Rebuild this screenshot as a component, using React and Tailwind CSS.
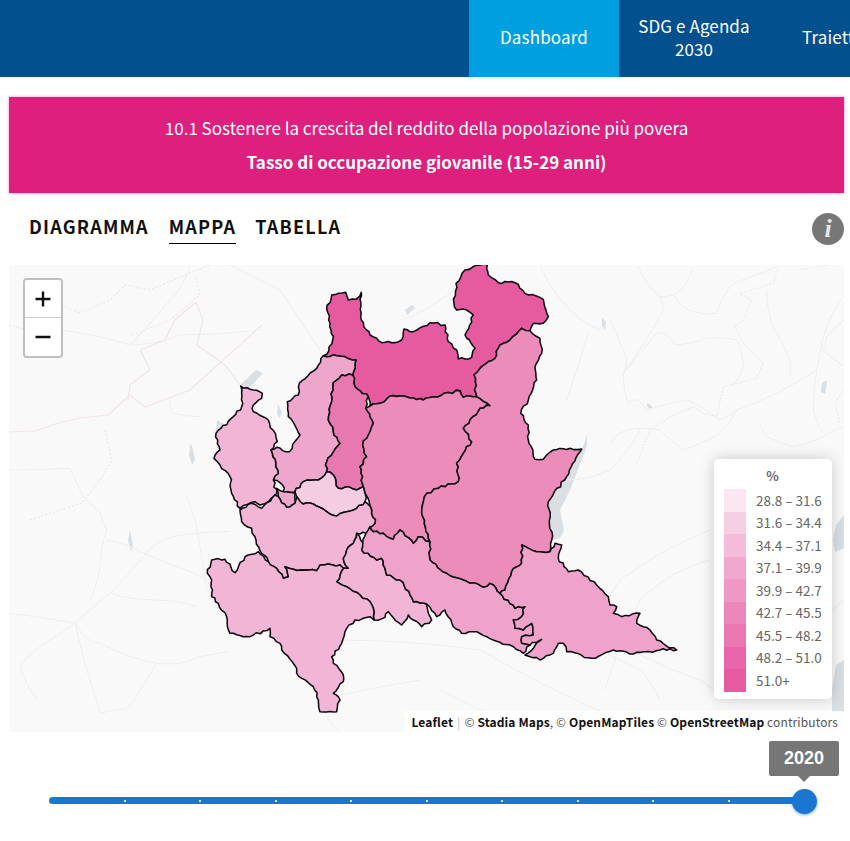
import React from "react";

const T = (s) => s.trim().split(/\s+/).map((p) => p.split(",").map(Number));
// y in zoom-3 frame gets shifted to the common frame
const L = (s) => T(s).map(([x, y]) => [x, y + 660]);

function hash(a, b) {
  const v = Math.sin(a * 12.9898 + b * 78.233) * 43758.5453;
  return v - Math.floor(v);
}
function rough(pts) {
  const out = [];
  for (let i = 0; i < pts.length; i++) {
    const a = pts[i];
    const b = pts[(i + 1) % pts.length];
    const flip = a[0] > b[0] || (a[0] === b[0] && a[1] > b[1]);
    const p = flip ? b : a;
    const q = flip ? a : b;
    const len = Math.hypot(q[0] - p[0], q[1] - p[1]);
    const n = Math.max(1, Math.round(len / 11));
    const seg = [];
    for (let k = 1; k < n; k++) {
      const t = k / n;
      const d = (hash(p[0] + k, q[1] + k * 3) - 0.5) * 8;
      const nx = -(q[1] - p[1]) / (len || 1);
      const ny = (q[0] - p[0]) / (len || 1);
      seg.push([p[0] + (q[0] - p[0]) * t + nx * d, p[1] + (q[1] - p[1]) * t + ny * d]);
    }
    if (flip) seg.reverse();
    out.push(a, ...seg);
  }
  return out.map(([x, y]) => `${x.toFixed(1)},${y.toFixed(1)}`).join(" ");
}

const regions = [
  // Sondrio / Alta
  ["#e65a9f", [...T(`380,283 398,240 390,190 380,148 395,105 437,97 445,120 468,118 484,97 484,180 510,225 545,248 575,248 605,240 612,207 640,215 690,188 735,195 745,245 770,270 775,297 815,292 825,265 795,225 820,165 800,150 770,150 762,130 768,70 795,30 830,15 862,15 865,45 895,68 945,68 975,100 1030,118 1045,170 1030,190 1000,190 990,212 965,205 930,240 900,255 885,295 840,325 822,345 830,410 790,412 780,392 700,410 670,420 620,410 570,408 540,430 510,438 505,410 465,380 458,345 468,300 410,287 370,287`)]],
  // Como
  ["#efa6cc", T(`370,287 410,287 468,300 458,345 425,345 400,368 395,425 385,480 400,515 420,550 380,605 380,635 355,660 310,665 285,695 250,695 248,675 220,660 235,640 212,570 230,562 268,575 300,525 265,470 262,425 295,405 298,370 350,325`)],
  // Lecco
  ["#e878b0", T(`425,345 458,345 465,380 505,410 497,445 520,490 505,525 488,555 500,590 480,620 490,680 470,690 445,680 415,685 400,645 380,635 380,605 420,550 400,515 385,480 395,425 400,368`)],
  // Bergamo
  ["#ec8cba", [...T(`497,445 510,438 540,430 570,408 620,410 670,420 700,410 780,392 790,412 830,410 870,437 840,445 790,505 815,545 790,580 770,610 775,665 715,685 680,700`), ...L(`670,65 665,100 690,185 655,170 640,190 600,150 580,178 550,160 520,155 510,140 525,130 515,90 495,40`), ...T(`490,680 480,620 500,590 488,555 505,525 520,490`)]],
  // Brescia
  ["#ec8cba", [...T(`830,410 822,345 840,325 885,295 900,255 930,240 965,205 990,212 1020,235 1025,280 1005,320 1010,360 985,420 962,460 985,495 985,540 1005,598 1030,598 1060,570 1110,565 1145,567 1100,650`), ...L(`1045,65 1055,180 1050,215 1010,215 965,195 965,250 935,275 915,330 900,340 870,310 850,322 790,300 740,280 690,240 690,185 665,100 670,65`), ...T(`680,700 715,685 775,665 770,610 790,580 815,545 790,505 840,445 870,437`)]],
  // Varese
  ["#f3b5d5", T(`122,378 160,390 187,400 185,415 160,435 160,455 205,480 232,545 212,570 235,640 220,660 230,700 205,725 180,735 165,725 120,745 95,700 90,650 60,615 42,595 60,570 48,520 100,470 125,440`)],
  // Monza
  ["#efa6cc", L(`230,25 250,35 285,40 285,70 260,82 235,50`)],
  // Milano
  ["#f5cde2", L(`285,35 310,5 355,0 380,-25 400,-15 415,25 445,20 470,30 490,20 495,40 495,65 470,85 440,95 410,108 380,95 340,72 310,72 290,50`)],
  // Pavia nord (Milano sud)
  ["#f3b5d5", L(`120,90 155,70 185,85 225,45 235,50 260,82 285,70 290,50 310,72 340,72 380,95 410,108 440,95 470,85 495,65 515,90 525,130 498,160 470,160 460,190 440,210 430,235 445,265 430,265 420,255 360,255 350,272 280,268 255,260 265,290 250,295 230,265 205,245 180,212 165,170 155,145 125,125`)],
  // Lodi
  ["#f3b5d5", L(`470,160 490,190 485,210 530,240 545,235 560,285 600,300 630,345 640,365 680,372 695,420 665,440 625,405 605,435 565,395 555,412 522,420 520,385 510,365 480,345 440,320 410,305 430,265 445,265 430,235 440,210 460,190`)],
  // Cremona
  ["#efa3ca", L(`498,160 510,140 520,155 550,160 580,178 600,150 640,190 655,170 690,185 690,240 740,280 790,300 850,322 870,310 900,340 945,385 975,380 965,410 940,420 945,445 970,450 995,430 1000,465 965,470 965,490 990,495 970,520 930,495 880,480 830,455 785,460 760,440 735,390 710,410 695,392 680,372 640,365 630,345 600,300 560,285 545,235 530,240 485,210`)],
  // Mantova
  ["#efa3ca", L(`965,195 1010,215 1050,215 1065,190 1085,195 1075,235 1105,275 1135,270 1190,315 1225,350 1230,375 1250,380 1240,400 1265,410 1320,400 1310,430 1350,450 1370,480 1430,510 1380,510 1300,522 1240,510 1175,535 1100,515 1090,490 1075,490 1060,520 1020,540 975,525 1025,478 990,495 965,490 965,470 1000,465 995,430 970,450 945,445 940,420 965,410 975,380 945,385 900,340 915,330 935,275 965,250`)],
  // Pavia
  ["#f3b5d5", L(`22,280 35,240 75,238 105,278 135,230 175,215 205,245 230,265 250,295 265,290 255,260 280,268 350,272 360,255 420,255 430,265 410,305 440,320 480,345 510,365 520,385 522,420 510,410 465,420 440,445 425,490 395,530 400,550 430,585 430,605 400,640 420,660 410,695 360,695 355,660 340,620 290,580 290,565 245,510 240,490 210,470 210,445 150,470 90,460 80,410 55,370 35,350 35,300`)],
];

const legend = [
  ["#fbe6f1", "28.8 – 31.6"],
  ["#f7cfe3", "31.6 – 34.4"],
  ["#f4bcd9", "34.4 – 37.1"],
  ["#f1a8cf", "37.1 – 39.9"],
  ["#ef97c5", "39.9 – 42.7"],
  ["#ec87bb", "42.7 – 45.5"],
  ["#ea76b2", "45.5 – 48.2"],
  ["#e866a9", "48.2 – 51.0"],
  ["#e65a9f", "51.0+"],
];

const roads = [
  // bottom-left frame x/3, 380+y/3
  "M27 700 Q120 710 225 730 Q280 680 330 640 Q380 590 430 530 Q470 480 520 470 Q600 455 690 455",
  "M225 730 Q260 790 300 790 Q400 840 470 850 Q540 860 600 830 Q650 820 690 815",
  "M225 730 Q240 790 250 830 Q260 870 270 900 Q290 960 300 1000",
  "M225 730 Q170 770 120 800 Q80 830 60 860 Q80 920 110 960",
  "M320 450 Q300 510 300 560 Q290 620 270 660",
  "M320 480 Q380 490 430 520 Q500 550 560 570 Q600 590 620 600",
  "M560 350 Q590 420 600 500 Q610 570 620 620 Q640 680 680 720",
  "M470 850 Q440 900 420 930 Q400 970 380 985 Q340 990 300 1000",
  "M330 640 Q400 660 460 660 Q530 660 590 680",
  "M27 270 Q120 270 210 265 Q230 310 250 350 Q280 380 300 400 Q310 430 320 450",
  "M510 60 Q510 90 520 100 Q560 110 600 110",
];
const roads2 = [
  // top-right frame 560+x/3, 260+y/3
  "M235 20 Q260 80 300 110 Q320 140 300 170 Q250 260 190 340 Q190 400 205 430 Q230 400 260 450 Q320 430 380 420 Q430 440 480 480 Q510 470 530 450 Q650 410 770 330 Q780 280 790 230 Q810 160 850 110",
  "M300 110 Q320 110 340 105 Q380 90 400 20",
  "M340 105 Q370 150 400 155 Q440 165 470 160 Q490 100 520 70 Q600 40 650 20",
  "M190 340 Q240 280 290 220 Q320 210 345 255 Q400 250 440 235 Q490 230 530 240 Q550 280 550 320 Q540 360 510 380",
  "M85 220 Q70 260 60 300 Q40 360 20 420",
  "M150 180 Q180 240 200 300 Q200 320 190 340",
  "M600 490 Q610 520 620 530 Q660 550 700 560 Q750 550 790 530 Q820 510 850 500",
  "M770 330 Q760 390 760 450 Q770 490 790 520",
  "M150 550 Q170 520 200 510 Q250 500 300 510 Q330 540 370 570 Q430 550 480 520 Q510 490 530 450",
  "M620 90 Q620 150 640 200 Q670 250 690 300 Q695 330 690 350",
];
const roads3 = [
  // middle/bottom in page coordinates
  "M440 690 Q470 705 500 720 Q570 730 640 732",
  "M335 640 Q410 640 480 650 Q550 690 620 720 Q700 730 780 720",
  "M420 680 Q360 690 320 700 Q325 720 340 732",
  "M605 690 Q620 640 640 600 Q670 570 710 560",
  "M590 640 Q600 610 620 580 Q660 550 710 530",
  "M630 650 Q670 670 700 680 L714 690",
  "M660 700 Q650 680 640 670 Q620 660 600 650",
  "M770 700 Q780 670 800 640 Q820 620 844 600",
  "M200 250 Q240 270 280 290 Q300 320 320 350",
  "M470 265 Q460 290 440 300 Q420 315 400 320",
  "M540 265 Q550 290 570 310 Q585 325 600 330",
  "M60 330 Q100 335 130 345 Q155 345 180 335 Q220 335 260 330",
  "M190 265 Q185 285 170 300 Q150 325 130 345",
  "M565 480 Q590 480 610 470 Q630 450 640 430",
];

function BaseMap() {
  return (
    <svg className="absolute inset-0 h-full w-full" viewBox="9 265 835 467" aria-hidden="true">
      <rect x="9" y="265" width="835" height="467" fill="#f9f9f9" />
      {/* lakes */}
      <g fill="#d9dfe3">
        <path d="M217 420 L224 424 L232 446 L222 452 L215 436 Z" />
        <path d="M190 444 L192 446 L195 460 L192 465 L189 455 Z" />
        <path d="M241 384 L256 370 L263 373 L252 385 L240 394 Z" />
        <path d="M278 404 L282 412 L280 418 L277 414 Z" />
        <path d="M405 310 L412 305 L415 308 L407 315 Z" />
        <path d="M583 447 L587 434 L587 446 L570 490 L560 510 L564 530 L560 538 L552 540 L545 500 Z" />
        <path d="M130 530 L133 545 L131 552 L128 540 Z" />
        <path d="M836 525 L844 515 L844 548 L835 552 L833 540 Z" />
        <path d="M836 665 L844 660 L844 712 L832 712 L832 690 Z" />
        <path d="M822 383 L827 380 L825 394 L821 392 Z" />
        <path d="M647 403 L651 405 L652 408 L648 408 Z" />
        <path d="M602 318 L606 322 L605 330 L602 325 Z" />
      </g>
      <g fill="none" stroke="#eeeeee" strokeWidth="1">
        <g transform="scale(0.3333) translate(0 1140)">
          {roads.map((d) => <path key={d} d={d} strokeWidth="3" />)}
        </g>
        <g transform="translate(560 260) scale(0.3333)">
          {roads2.map((d) => <path key={d} d={d} strokeWidth="3" />)}
        </g>
        {roads3.map((d) => <path key={d} d={d} />)}
      </g>
      <g fill="none" stroke="#f2e4e8" strokeWidth="1.2">
        <path d="M9 432 L35 431 L55 424 L80 418 L108 415 L130 395 L145 407 L190 390 L262 325" />
        <path d="M132 335 L170 320 L200 295 L195 275" strokeDasharray="2 2" />
        <path d="M9 325 L24 329 M63 306 L80 313 L110 300 L125 285 L150 290 L185 275 L210 265" strokeDasharray="2 2" />
        <path d="M196 302 L175 320 L165 340 L140 350 L150 370 L130 385 L128 400" />
        <path d="M196 302 L203 320 L197 345 L225 365 L240 385" />
        <path d="M105 430 L112 460 L100 480 L82 503 L60 510 L30 520" strokeDasharray="2 2" />
        <g transform="translate(560 260) scale(0.3333)" strokeDasharray="5 5" strokeWidth="3.6">
          <path d="M655 20 L640 70 L540 100 L575 120 L550 180 L525 200 L550 250 L610 310 L590 355 L490 380 L470 470 L430 460 L400 440 L330 470 L270 510 L230 610" />
          <path d="M850 180 L800 230 L790 270 L850 320 M850 390 L825 430 L840 490" />
          <path d="M720 30 L810 15" />
        </g>
      </g>
    </svg>
  );
}

function Regions() {
  return (
    <svg className="absolute inset-0 h-full w-full" viewBox="9 265 835 467" aria-hidden="true">
      <g transform="translate(200 260) scale(0.33333)" strokeLinejoin="round">
        {regions.map(([fill, pts], i) => (
          <polygon key={i} points={rough(pts)} fill={fill} stroke="#0c0810" strokeWidth="4.6" />
        ))}
      </g>
    </svg>
  );
}

function Slider() {
  const ticks = [125, 200, 276, 351, 427, 502, 578, 653, 729];
  return (
    <div className="relative h-[109px]">
      <div className="absolute left-[769px] top-[9px] flex h-[35px] w-[70px] items-center justify-center rounded-[2px] bg-[#767676] font-['Liberation_Sans',sans-serif] text-[18px] font-bold text-white">
        2020
      </div>
      <div className="absolute left-[798px] top-[44px] h-0 w-0 border-x-[6px] border-t-[6px] border-x-transparent border-t-[#767676]" />
      <div className="absolute left-[49px] top-[65px] h-[7px] w-[755px] rounded-full bg-[#1b76d2]" />
      {ticks.map((x) => (
        <div key={x} style={{ left: x - 1 }} className="absolute top-[68px] h-[2px] w-[2px] bg-[#cfe6fb]" />
      ))}
      <div className="absolute left-[792px] top-[57px] h-[25px] w-[25px] rounded-full bg-[#1b76d2] shadow-[0_1px_3px_rgba(27,118,210,0.6)]" />
    </div>
  );
}

export default function App() {
  return (
    <div className="h-[841px] w-[850px] overflow-hidden bg-white font-['Noto_Sans_CJK_SC','Noto_Sans',sans-serif] text-black">
      <header className="flex h-[77px] overflow-hidden bg-[#03508f] pl-[469px] text-[17px] text-white">
        <div className="flex w-[150px] shrink-0 items-center justify-center bg-[#009fdf] pb-[4px] tracking-[0.15px]">Dashboard</div>
        <div className="flex w-[150px] shrink-0 items-center justify-center pb-[3px] text-center leading-[23px] tracking-[0.1px]">
          SDG e Agenda<br />2030
        </div>
        <div className="ml-[33px] flex shrink-0 items-center pb-[4px] tracking-[0.15px]">Traiettorie</div>
      </header>

      <div className="ml-[9px] mt-[20px] flex h-[96px] w-[835px] flex-col items-center bg-[#dd1f7d] pt-[18px] text-white shadow-[0_0_3px_rgba(221,31,125,0.5)]">
        <div className="text-[17px] leading-[26px]">10.1 Sostenere la crescita del reddito della popolazione più povera</div>
        <div className="mt-[8px] text-[17px] font-bold leading-[26px]">Tasso di occupazione giovanile (15-29 anni)</div>
      </div>

      <div className="relative flex h-[72px] items-start pl-[29px] pt-[20px] text-[18px] font-bold leading-[26px] tracking-[1.2px] text-[#111]">
        <span>DIAGRAMMA</span>
        <span className="ml-[20px] border-b-[1.5px] border-black pb-[4px]">MAPPA</span>
        <span className="ml-[19px]">TABELLA</span>
        <div className="absolute right-[6px] top-[20px] flex h-[32px] w-[32px] items-center justify-center rounded-full bg-[#777] font-['Liberation_Serif',serif] text-[26px] italic tracking-normal text-[#e8e8e8]">i</div>
      </div>

      <div className="relative ml-[9px] h-[467px] w-[835px] overflow-hidden">
        <BaseMap />
        <Regions />

        <div className="absolute left-[14px] top-[13px] w-[40px] overflow-hidden rounded-[4px] border-2 border-[#bfbfbf] bg-white text-black">
          <div className="flex h-[38px] items-center justify-center border-b border-[#ccc]">
            <svg width="16" height="16" viewBox="0 0 16 16"><path d="M8 0.5V15.5M0.5 8H15.5" stroke="#111" strokeWidth="2.4" /></svg>
          </div>
          <div className="flex h-[38px] items-center justify-center">
            <svg width="16" height="16" viewBox="0 0 16 16"><path d="M0.5 8H15.5" stroke="#111" strokeWidth="2.4" /></svg>
          </div>
        </div>

        <div className="absolute left-[705px] top-[194px] h-[240px] w-[118px] rounded-[5px] bg-white/95 pl-[10px] pt-[8px] text-[13.5px] text-[#666] shadow-[0_0_15px_rgba(0,0,0,0.2)]">
          <div className="h-[17px] w-[56px] pl-[41px] text-center text-[13px] font-bold leading-[17px]">%</div>
          <div className="mt-[5px] flex flex-col">
            {legend.map(([c, t]) => (
              <div key={t} className="flex h-[22.5px] items-center">
                <span className="h-[22.5px] w-[22px] shrink-0" style={{ background: c }} />
                <span className="ml-[10px] whitespace-nowrap pb-[1px] leading-[22px] text-[#666]">{t}</span>
              </div>
            ))}
          </div>
        </div>

        <div className="absolute bottom-0 right-0 flex h-[21px] items-center whitespace-nowrap bg-white/80 pl-[7px] pr-[6px] text-[12px] leading-[21px] tracking-[0.12px] text-[#555]">
          <b className="text-[#111]">Leaflet</b>
          <span className="mx-[4px] text-[#bbb]">|</span>
          <span>©&nbsp;</span><b className="text-[#111]">Stadia Maps</b><span>,&nbsp;©&nbsp;</span>
          <b className="text-[#111]">OpenMapTiles</b><span>&nbsp;©&nbsp;</span>
          <b className="text-[#111]">OpenStreetMap</b><span>&nbsp;contributors</span>
        </div>
      </div>

      <Slider />
    </div>
  );
}
